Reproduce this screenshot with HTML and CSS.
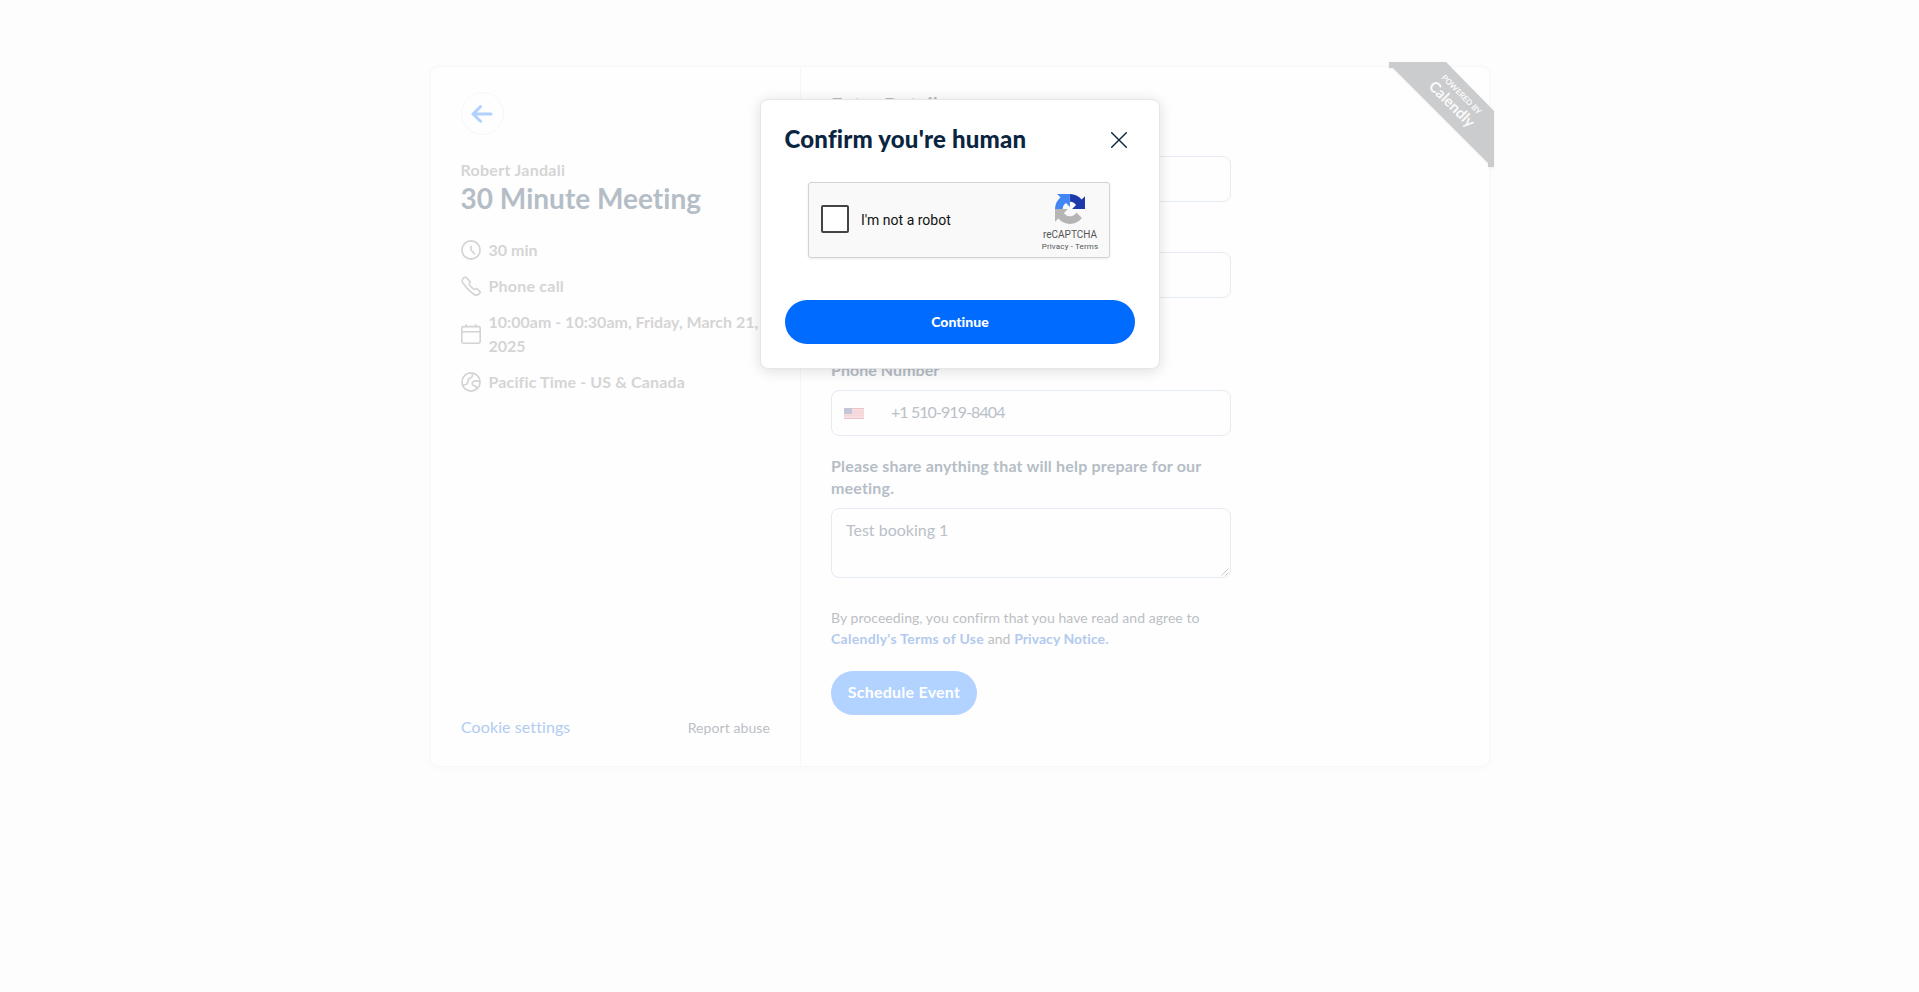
FILE: index.html
```html
<!DOCTYPE html>
<html lang="en">
<head>
<meta charset="utf-8">
<title>30 Minute Meeting - Enter Details</title>
<link rel="stylesheet" href="styles.css">
</head>
<body>
<main class="card">
  <aside class="summary">
    <div class="back" role="button" aria-label="Back">
      <svg width="22" height="18" viewBox="0 0 22 18" fill="none" stroke="#b0d0ff" stroke-width="3" stroke-linecap="round" stroke-linejoin="round"><path d="M20 9H2M9.500 1.700 2 9l7.500 7.300"/></svg>
    </div>
    <div class="host">Robert Jandali</div>
    <h1 class="title">30 Minute Meeting</h1>
    <ul class="facts">
      <li class="fact">
        <svg width="20" height="20" viewBox="0 0 20 20" fill="none" stroke="#d3d3d3" stroke-width="1.600" stroke-linecap="round" stroke-linejoin="round"><circle cx="10" cy="10" r="9.100"/><path d="M10 6.200V10l3.600 4"/></svg>
        <span>30 min</span>
      </li>
      <li class="fact call">
        <svg width="20" height="20" viewBox="0 0 20 20" fill="none" stroke="#d3d3d3" stroke-width="1.600" stroke-linejoin="round"><path d="M13.100 18.500l.01.010a4.100 4.100 0 0 0 5-.6l.6-.6a1.400 1.400 0 0 0 0-1.900l-2.400-2.400a1.400 1.400 0 0 0-1.900 0 1.400 1.400 0 0 1-1.900 0L8.700 9.200a1.400 1.400 0 0 1 0-1.900 1.400 1.400 0 0 0 0-1.900L5.300 1.500a1.400 1.400 0 0 0-1.900 0l-.9.500a4.100 4.100 0 0 0-.6 5A41 41 0 0 0 13.100 18.500z"/></svg>
        <span>Phone call</span>
      </li>
      <li class="fact">
        <svg width="20" height="20" viewBox="0 0 20 20" fill="none" stroke="#d3d3d3" stroke-width="1.600" stroke-linecap="round" stroke-linejoin="round"><rect x=".8" y="2.600" width="18.400" height="16.600" rx="1.600"/><path d="M.8 7.800h18.400M5.200 2.600V.8M14.800 2.600V.8"/></svg>
        <span>10:00am - 10:30am, Friday, March 21,<br>2025</span>
      </li>
      <li class="fact zone">
        <svg width="20" height="20" viewBox="0 0 20 20" fill="none" stroke="#d3d3d3" stroke-width="1.600" stroke-linejoin="round"><circle cx="10" cy="10" r="9.100"/><path d="M11.300 1c.5 2.500.3 4-1.500 4.700C7.500 6.300 7 7 7 9c0 3-1.500 4-5.500 3.700M19 9.500c-3-.8-6.500-.8-7.500.8-1 1.900.3 3.500 2.500 3.700 1.400.2 1.600 1 1.400 3"/></svg>
        <span>Pacific Time - US &amp; Canada</span>
      </li>
    </ul>
    <footer class="links"><a class="cookie">Cookie settings</a><a class="report">Report abuse</a></footer>
  </aside>
  <section class="details">
    <h2 class="heading">Enter Details</h2>
    <div class="input name"></div>
    <div class="input email"></div>
    <div class="label phone-label">Phone Number</div>
    <div class="input phone">
      <svg width="20" height="11" viewBox="0 0 20 11"><path fill="#f6dde0" d="M0 0h20v11H0z"/><path stroke="#f0c4cb" d="M0 .5h20M0 10.500h20"/><path stroke="#f3d1d6" stroke-width=".7" d="M0 3.500h20M0 5.500h20M0 7.500h20"/><path fill="#c5c6d8" d="M0 0h8v6H0z"/></svg>
      <span class="number">+1 510-919-8404</span>
    </div>
    <div class="label notes-label">Please share anything that will help prepare for our<br>meeting.</div>
    <div class="input notes">Test booking 1
      <svg class="grip" width="8" height="8" viewBox="0 0 8 8" stroke="#c4c4c4" stroke-width=".9"><path d="M.5 7.500l7-7M4.500 7.500l3-3"/></svg>
    </div>
    <p class="terms">By proceeding, you confirm that you have read and agree to<br><b class="tos">Calendly's Terms of Use</b> and <b>Privacy Notice.</b></p>
    <div class="schedule" role="button">Schedule Event</div>
  </section>
  <div class="ribbon">
    <svg width="105" height="105" viewBox="0 0 105 105"><path fill="#cbccce" d="M0 0h57l48 49v56h-6v-4L4 6H0z"/></svg>
    <div class="ribbon-text"><span class="powered">POWERED BY</span><span class="brand">Calendly</span></div>
  </div>
</main>

<div class="modal" role="dialog">
  <header class="modal-head">
    <h3 class="modal-title">Confirm you're human</h3>
    <svg width="16" height="16" viewBox="0 0 16 16" stroke="#0a2540" stroke-width="1.400" stroke-linecap="round"><path d="M.7.700l14.600 14.600M15.300.700L.7 15.300"/></svg>
  </header>
  <div class="captcha">
    <div class="box"></div>
    <span class="robot">I'm not a robot</span>
    <div class="captcha-brand">
      <svg width="30" height="30" viewBox="0 0 64 64"><path fill="#1c3aa9" d="M64 31.955l-.033-1.370V4.687l-7.168 7.169C50.933 4.674 42.033.093 32.060.093V16.400c.48 0 .85.056 1.123.112 4.924.389 9.190 3.106 11.703 7.050l-8.317 8.317 27.432.076"/><path fill="#4285f4" d="M31.862.094l-1.371.033H4.594l7.168 7.168C4.581 13.161 0 22.061 0 32.034h16.257c0-.48.056-.85.162-1.123.389-4.924 3.106-9.190 7.050-11.703l8.317 8.317.076-27.432"/><path fill="#b5b5b5" d="M.001 32.034l.033 1.371v25.897l7.168-7.168C13.068 59.315 21.968 63.896 31.941 63.896c10.380 0 19.599-4.958 25.443-12.637L45.634 39.385a15.600 15.600 0 0 1-4.763 5.344c-2.050 1.600-4.956 2.910-8.930 2.910-.48 0-.85-.056-1.123-.162-4.924-.389-9.190-3.106-11.703-7.050l8.317-8.317-27.432-.076"/></svg>
      <span class="re">reCAPTCHA</span>
      <span class="policy">Privacy - Terms</span>
    </div>
  </div>
  <div class="continue" role="button">Continue</div>
</div>
</body>
</html>
```

FILE: styles.css
```css
* { box-sizing: border-box; }
body {
  margin: 0;
  min-height: 992px;
  padding: 66px 0 0 430px;
  background: #fdfdfd;
  font-family: Lato, "Open Sans", sans-serif;
  font-size: 16px;
  overflow: hidden;
}
h1, h2, h3, p, ul { margin: 0; padding: 0; }
.card {
  position: relative;
  display: flex;
  width: 1060px;
  height: 701px;
  background: #fefefe;
  border: 1px solid #f7f7f8;
  border-radius: 8px;
  box-shadow: 0 1px 8px rgba(0, 0, 0, .02);
}
.summary {
  display: flex;
  flex-direction: column;
  width: 370px;
  padding: 25px 30px 26px 30px;
  border-right: 1px solid #f7f7f8;
  color: #d5d5d5;
  font-weight: 700;
}
.back {
  display: flex;
  align-items: center;
  justify-content: center;
  width: 43px;
  height: 43px;
  padding-right: 2px;
  border: 1px solid #f6f7f8;
  border-radius: 50%;
}
.host { margin: 23px 0 0 -.5px; line-height: 24px; letter-spacing: .28px; white-space: nowrap; }
.title { margin-left: -.5px; color: #b5bdc6; font-size: 28px; line-height: 32px; letter-spacing: .02px; white-space: nowrap; }
.facts { list-style: none; margin-top: 24px; display: flex; flex-direction: column; gap: 12px; }
.fact { display: flex; align-items: center; gap: 7.500px; line-height: 24px; letter-spacing: .01px; white-space: nowrap; }
.call { letter-spacing: .22px; }
.zone { letter-spacing: .14px; }
.fact svg { flex: none; }
.links {
  display: flex;
  justify-content: space-between;
  align-items: baseline;
  margin-top: auto;
  line-height: 24px;
  letter-spacing: .09px;
  font-weight: 400;
}
.cookie { color: #b2ccf1; }
.report { color: #bbc0c6; font-size: 14px; }
.details { width: 430px; padding: 24px 0 0 30px; }
.heading { color: #b5bdc6; font-size: 20px; line-height: 28px; letter-spacing: .1px; }
.input {
  width: 400px;
  height: 46px;
  border: 1px solid #e5ebf2;
  border-radius: 8px;
  color: #b9c0c8;
}
.name { margin-top: 37px; }
.email { margin-top: 50px; }
.label { color: #b5bdc6; font-weight: 700; line-height: 22px; letter-spacing: .18px; white-space: nowrap; }
.phone-label { margin-top: 61px; letter-spacing: .05px; }
.phone { display: flex; align-items: center; gap: 27px; margin-top: 9px; padding-left: 12px; }
.number { margin-top: -3px; letter-spacing: -.92px; }
.notes-label { margin-top: 19px; }
.notes { position: relative; height: 70px; margin-top: 9px; padding: 10px 14px; line-height: 22px; }
.grip { position: absolute; right: 1px; bottom: 1px; }
.terms { margin-top: 29px; color: #bcbfc4; font-size: 14px; line-height: 21px; letter-spacing: .06px; white-space: nowrap; }
.terms b { color: #b3caef; }
.tos { letter-spacing: .29px; }
.schedule {
  display: flex;
  align-items: center;
  justify-content: center;
  width: 146px;
  height: 44px;
  margin-top: 22px;
  padding-bottom: 3px;
  border-radius: 22px;
  background: #b2d2ff;
  color: #fff;
  font-weight: 700;
  letter-spacing: .24px;
}
.ribbon { position: absolute; top: -5px; right: -5px; width: 105px; height: 105px; }
.ribbon svg { display: block; filter: drop-shadow(0 1px 1px rgba(0, 0, 0, .05)); }
.ribbon-text {
  position: absolute;
  left: 17px;
  top: 25px;
  width: 100px;
  display: flex;
  flex-direction: column;
  align-items: center;
  color: #fafafa;
  transform: rotate(45deg);
}
.powered { font-size: 8px; line-height: 11px; font-weight: 700; }
.brand { font-size: 15px; line-height: 15px; font-weight: 700; }
.modal {
  position: absolute;
  left: 760px;
  top: 99px;
  width: 400px;
  height: 270px;
  padding: 24px;
  background: #fff;
  border: 1px solid #e6e6e7;
  border-radius: 8px;
  box-shadow: 0 2px 14px rgba(0, 0, 0, .13);
}
.modal-head { display: flex; align-items: center; justify-content: space-between; height: 32px; padding-right: 8px; }
.modal-title { margin: -2px 0 0 -.5px; color: #0a2540; font-size: 24px; font-weight: 900; line-height: 32px; letter-spacing: .2px; white-space: nowrap; }
.captcha {
  display: flex;
  align-items: center;
  width: 302px;
  height: 76px;
  margin: 26px 0 0 23px;
  padding: 0 9px 0 12px;
  background: #f9f9f9;
  border: 1px solid #d3d3d3;
  border-radius: 3px;
  box-shadow: 0 1px 3px rgba(0, 0, 0, .08);
  font-family: Roboto, sans-serif;
}
.box { width: 28px; height: 28px; margin-top: -2px; border: 2px solid #444; border-radius: 2px; background: #fff; }
.robot { margin-left: 12px; color: #111; font-size: 14px; }
.captcha-brand { display: flex; flex-direction: column; align-items: center; width: 60px; margin: 6px 0 0 auto; color: #555; }
.re { margin-top: 4px; font-size: 10px; line-height: 13px; }
.policy { font-size: 8px; line-height: 11px; letter-spacing: .15px; }
.continue {
  display: flex;
  align-items: center;
  justify-content: center;
  height: 44px;
  margin-top: 42px;
  padding-bottom: 2px;
  border-radius: 22px;
  background: #006bff;
  color: #fff;
  font-size: 14px;
  font-weight: 900;
  letter-spacing: .05px;
}
```
